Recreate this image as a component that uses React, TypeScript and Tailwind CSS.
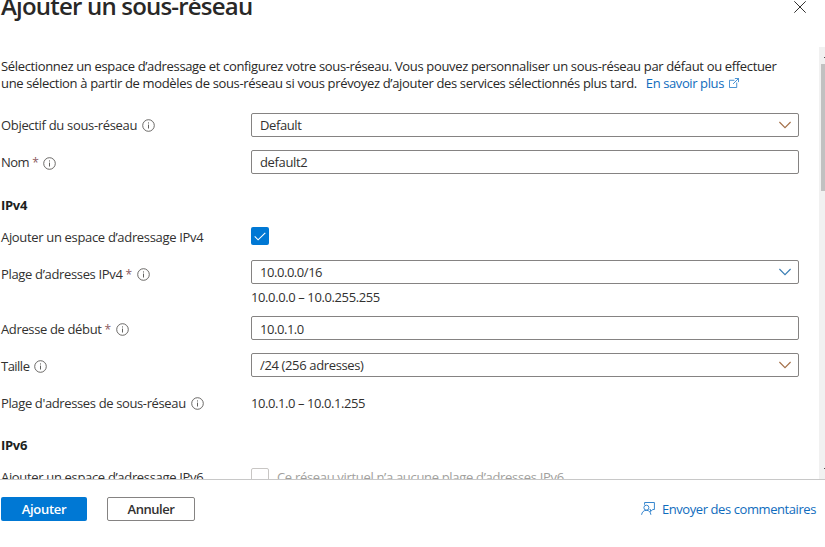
import type { ReactNode } from "react";

function InfoIcon() {
  return (
    <svg width="13" height="13" viewBox="0 0 13 13" fill="none" className="mt-px shrink-0">
      <circle cx="6.5" cy="6.5" r="5.8" stroke="#5a5856" strokeWidth="0.9" />
      <path d="M6.5 5.6V9.5M6.5 3.4V4.5" stroke="#5a5856" strokeWidth="0.95" />
    </svg>
  );
}

function Chevron({ color }: { color: string }) {
  return (
    <svg width="12" height="8" viewBox="0 0 12 8" fill="none" stroke={color} strokeWidth="1.15">
      <path d="M0.4 1L6 6.6L11.6 1" />
    </svg>
  );
}

function Label({ children, tracking, required, info }: { children: ReactNode; tracking: string; required?: boolean; info?: boolean }) {
  return (
    <div className="flex h-6 w-[250px] shrink-0 items-center">
      <span className={tracking}>{children}</span>
      {required && <span className="ml-[3px] w-[6px] text-[12px] text-[#8c5a60]">*</span>}
      {info && (
        <span className="ml-[5px]">
          <InfoIcon />
        </span>
      )}
    </div>
  );
}

function Field({ children, chevron }: { children: ReactNode; chevron?: string }) {
  return (
    <div className="flex h-6 w-[548px] items-center justify-between rounded-[2px] border border-[#858382] pr-[7px] pl-2">
      {children}
      {chevron && <Chevron color={chevron} />}
    </div>
  );
}

export default function App() {
  return (
    <div className="flex h-[547px] w-[825px] flex-col overflow-hidden bg-white font-['Open_Sans','Noto_Sans',sans-serif] text-[13px] leading-[17px] whitespace-nowrap text-[#323130]">
      <header className="flex h-[47px] shrink-0 items-start justify-between pr-[19px] pl-px">
        <h1 className="-mt-[10px] text-[24px] leading-[32px] font-semibold tracking-[-0.8px] text-[#292827]">Ajouter un sous-réseau</h1>
        <svg width="12" height="12" viewBox="0 0 12 12" fill="none" stroke="#323130" strokeWidth="1" className="mt-[1px]">
          <path d="M0.3 0.3L11.7 11.7M11.7 0.3L0.3 11.7" />
        </svg>
      </header>

      <div className="flex h-[432px] shrink-0 justify-between">
        <main className="h-full w-[800px] overflow-hidden pl-px">
          <div className="mt-[11px] text-[#292827]">
            <p className="tracking-[-0.345px]">Sélectionnez un espace d’adressage et configurez votre sous-réseau. Vous pouvez personnaliser un sous-réseau par défaut ou effectuer</p>
            <p className="flex items-center">
              <span className="tracking-[-0.34px]">une sélection à partir de modèles de sous-réseau si vous prévoyez d’ajouter des services sélectionnés plus tard.</span>
              <a className="ml-[9px] flex items-center tracking-[-0.4px] text-[#0f6cbd]">
                En savoir plus
                <svg width="10" height="10" viewBox="0 0 11 11" fill="none" stroke="#2b7fcb" strokeWidth="0.95" className="mb-px ml-[5px]">
                  <path d="M6 2.5H0.5V10.5H8.5V5M6.5 0.5H10.5V4.5M10.5 0.5L4.5 6.5" />
                </svg>
              </a>
            </p>
          </div>

          <div className="mt-[21px] flex">
            <Label tracking="tracking-[-0.32px]" info>Objectif du sous-réseau</Label>
            <Field chevron="#a5714a"><span className="tracking-[-0.4px]">Default</span></Field>
          </div>
          <div className="mt-[13px] flex">
            <div className="flex h-6 w-[250px] shrink-0 items-center">
              <span className="tracking-[-0.5px]">Nom</span>
              <span className="ml-[3px] w-[6px] text-[12px] text-[#8c5a60]">*</span>
              <span className="mt-[2px] ml-[5px]"><InfoIcon /></span>
            </div>
            <Field><span className="tracking-[-0.35px]">default2</span></Field>
          </div>

          <h2 className="mt-[22px] leading-[18px] font-bold tracking-[-0.3px] text-[#201f1e]">IPv4</h2>
          <div className="mt-[10px] flex items-start">
            <div className="pt-px"><Label tracking="tracking-[-0.33px]">Ajouter un espace d’adressage IPv4</Label></div>
            <span className="mt-[3px] flex size-[18px] items-center justify-center rounded-[2px] bg-[#0078d4]">
              <svg width="12" height="9" viewBox="0 0 12 9" fill="none" stroke="white" strokeWidth="1.1">
                <path d="M0.7 4.4L4.1 7.8L11.3 0.8" />
              </svg>
            </span>
          </div>
          <div className="mt-[11px] flex">
            <div className="pt-[2px]"><Label tracking="tracking-[-0.34px]" required info>Plage d’adresses IPv4</Label></div>
            <div>
              <Field chevron="#3b7fb5"><span className="tracking-[-0.45px]">10.0.0.0/16</span></Field>
              <div className="mt-[5px] h-[17px] tracking-[-0.39px]">10.0.0.0 – 10.0.255.255</div>
            </div>
          </div>
          <div className="mt-[10px] flex">
            <div className="-mb-px pt-px"><Label tracking="tracking-[-0.36px]" required info>Adresse de début</Label></div>
            <Field><span className="pt-[2px] tracking-[-0.45px]">10.0.1.0</span></Field>
          </div>
          <div className="mt-[13px] flex">
            <div className="-mb-px pt-px"><Label tracking="tracking-[-0.52px]" info>Taille</Label></div>
            <Field chevron="#a5714a"><span className="tracking-[-0.36px]">/24 (256 adresses)</span></Field>
          </div>
          <div className="mt-[14px] flex items-center">
            <Label tracking="tracking-[-0.37px]" info>Plage d'adresses de sous-réseau</Label>
            <span className="tracking-[-0.42px]">10.0.1.0 – 10.0.1.255</span>
          </div>

          <h2 className="mt-[21px] leading-[18px] font-bold tracking-[-0.3px] text-[#201f1e]">IPv6</h2>
          <div className="mt-[11px] flex items-center">
            <Label tracking="tracking-[-0.33px]">Ajouter un espace d’adressage IPv6</Label>
            <span className="size-[18px] rounded-[2px] border border-[#c8c6c4]" />
            <span className="ml-2 tracking-[-0.32px] text-[#a19f9d]">Ce réseau virtuel n’a aucune plage d’adresses IPv6</span>
          </div>
        </main>
        <div className="flex w-[6px] flex-col items-end bg-[#f1f1f1]">
          <span className="mt-[10px] h-px w-px bg-[#505050]" />
          <span className="mt-[6px] h-[127px] w-1 bg-[#c1c1c1]" />
          <span className="mt-[277px] h-px w-px bg-[#505050]" />
        </div>
      </div>

      <footer className="flex h-[68px] shrink-0 items-start border-t border-[#c8c8c8] pt-[17px] pr-[9px] pl-px">
        <button className="h-6 w-[86px] rounded-[2px] bg-[#0078d4] font-semibold tracking-[-0.3px] text-white">Ajouter</button>
        <button className="ml-5 h-6 w-[88px] rounded-[2px] border border-[#858382] font-semibold tracking-[-0.45px]">Annuler</button>
        <a className="mt-1 ml-auto flex items-center text-[#0f6cbd]">
          <svg width="14" height="13" viewBox="0 0 14 13" fill="none" stroke="#2b7fcb" strokeWidth="0.95" className="-mt-[3px] mr-[7px]">
            <path d="M3.6 2.8V0.5H13.4V7.5H11.8L9.5 9.6V7.5H8.6" />
            <circle cx="5.4" cy="5.7" r="2.5" />
            <path d="M0.6 12.8C0.9 10.1 2.7 8.3 5.4 8.3S9.6 10.1 9.9 12.8" />
          </svg>
          <span className="tracking-[-0.42px]">Envoyer des commentaires</span>
        </a>
      </footer>
    </div>
  );
}
